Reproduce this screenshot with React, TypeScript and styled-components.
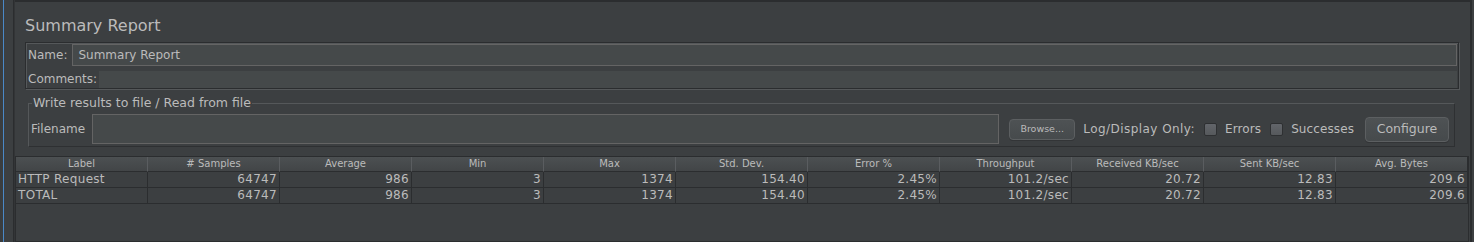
import React from "react";
import styled, { createGlobalStyle } from "styled-components";

interface ReportRow {
	label: string;
	samples: string;
	average: string;
	min: string;
	max: string;
	stdDev: string;
	errorPct: string;
	throughput: string;
	received: string;
	sent: string;
	avgBytes: string;
}

const COLUMNS = [
	"Label",
	"# Samples",
	"Average",
	"Min",
	"Max",
	"Std. Dev.",
	"Error %",
	"Throughput",
	"Received KB/sec",
	"Sent KB/sec",
	"Avg. Bytes",
];

const ROWS: Array<ReportRow> = [
	{
		label: "HTTP Request",
		samples: "64747",
		average: "986",
		min: "3",
		max: "1374",
		stdDev: "154.40",
		errorPct: "2.45%",
		throughput: "101.2/sec",
		received: "20.72",
		sent: "12.83",
		avgBytes: "209.6",
	},
	{
		label: "TOTAL",
		samples: "64747",
		average: "986",
		min: "3",
		max: "1374",
		stdDev: "154.40",
		errorPct: "2.45%",
		throughput: "101.2/sec",
		received: "20.72",
		sent: "12.83",
		avgBytes: "209.6",
	},
];

const GlobalStyle = createGlobalStyle`
	html, body {
		margin: 0;
		padding: 0;
		background: #3c3f41;
	}
	body {
		font-family: "DejaVu Sans", "Liberation Sans", sans-serif;
		color: #bbbbbb;
	}
	#root {
		height: 242px;
		overflow: hidden;
	}
`;

const Frame = styled.div`
	display: flex;
	width: 1474px;
	height: 242px;
	background: #3c3f41;
`;

const TreeEdge = styled.div`
	flex: 0 0 13px;
	background: linear-gradient(
		to right,
		#3a3d3f 0 3px,
		#4a88c7 3px 4px,
		#3c3f41 4px 100%
	);
`;

const SplitDivider = styled.div`
	flex: 0 0 2px;
	background: linear-gradient(to right, #2b2d2f 0 1px, #333537 1px 2px);
`;

const Panel = styled.div`
	flex: 1;
	display: flex;
	flex-direction: column;
	margin-right: 2px;
	border-top: 2px solid #2b2d2f;
	border-right: 2px solid #2b2d2f;
	min-width: 0;
`;

const Title = styled.div`
	margin: 14px 0 0 10px;
	font-size: 16px;
	line-height: 19px;
`;

const NameBox = styled.div`
	display: flex;
	flex-direction: column;
	gap: 5px;
	margin: 7px 11px 0 10px;
	padding: 1px 1px 0 2px;
	border: 1px solid #2b2d2f;
	box-shadow: inset 1px 1px 0 #55585a, 1px 1px 0 #55585a;
`;

const FieldRow = styled.div`
	display: flex;
	align-items: center;
`;

const Label = styled.span<{ $gap?: number; $spread?: number }>`
	font-size: 12px;
	line-height: 15px;
	white-space: nowrap;
	margin-right: ${(p) => p.$gap ?? 0}px;
	letter-spacing: ${(p) => p.$spread ?? 0}px;
`;

const TextInput = styled.input`
	flex: 1;
	height: 22px;
	box-sizing: border-box;
	margin: 0;
	padding: 0 5px;
	border: 1px solid #646464;
	background: #45494a;
	color: #bbbbbb;
	font-family: inherit;
	font-size: 12px;
	outline: none;
`;

const CommentsField = styled.div`
	flex: 1;
	height: 17px;
	background: #45494a;
`;

const GroupBox = styled.fieldset`
	margin: 6px 15px 0 13px;
	padding: 3px 5px 2px 2px;
	border: 1px solid #55585a;
	border-right-color: #2e3032;
	border-bottom-color: #2e3032;
	min-width: 0;
`;

const Legend = styled.legend`
	margin-left: 1px;
	padding: 0 1px;
	font-size: 12.5px;
	line-height: 16px;
`;

const FileRow = styled.div`
	display: flex;
	align-items: center;
	height: 30px;
`;

const FileField = styled.div`
	flex: 1;
	height: 30px;
	box-sizing: border-box;
	border: 1px solid #646464;
	background: #45494a;
`;

const Button = styled.button<{ $small?: boolean }>`
	box-sizing: border-box;
	height: ${(p) => (p.$small ? 21 : 25)}px;
	width: ${(p) => (p.$small ? 66 : 84)}px;
	margin: 0;
	padding: 0;
	border: 1px solid #5c5f61;
	border-radius: 4px;
	background: linear-gradient(#4e5254, #464a4c);
	box-shadow: 0 1px 0 #333537;
	color: #bbbbbb;
	font-family: inherit;
	font-size: ${(p) => (p.$small ? 9.5 : 12.5)}px;
	line-height: 1;
`;

const CheckItem = styled.label`
	display: flex;
	align-items: center;
	gap: 8px;
	font-size: 12px;
	line-height: 15px;
	white-space: nowrap;
	letter-spacing: 0.1px;
`;

const CheckBox = styled.span`
	display: inline-block;
	width: 13px;
	height: 13px;
	box-sizing: border-box;
	border: 1px solid #2e3032;
	border-radius: 2px;
	background: linear-gradient(#62656a, #56595c);
`;

const TableScroll = styled.div`
	flex: 1;
	margin: 9px 1px 0 0;
	border: 1px solid #2b2d2f;
	background: #3c3f41;
	overflow: hidden;
`;

const GridRow = styled.div`
	display: grid;
	grid-template-columns: repeat(11, 1fr);
`;

const HeadCell = styled.div`
	height: 15px;
	box-sizing: border-box;
	border-right: 1px solid #5a5d60;
	border-bottom: 1px solid #2b2d2f;
	background: linear-gradient(#4c5052, #424547);
	font-size: 10px;
	line-height: 14px;
	text-align: center;
	white-space: nowrap;
	overflow: hidden;

	&:last-child {
		border-right-color: #2b2d2f;
	}
`;

const Cell = styled.div<{ $left?: boolean }>`
	height: 16px;
	box-sizing: border-box;
	padding: 0 2px;
	border-right: 1px solid #2b2d2f;
	border-bottom: 1px solid #2b2d2f;
	font-size: 12px;
	line-height: 15px;
	letter-spacing: 0.3px;
	text-align: ${(p) => (p.$left ? "left" : "right")};
	white-space: nowrap;
	overflow: hidden;
`;

const App = (): JSX.Element => {
	return (
		<Frame>
			<GlobalStyle />
			<TreeEdge />
			<SplitDivider />
			<Panel>
				<Title>Summary Report</Title>
				<NameBox>
					<FieldRow>
						<Label $gap={5}>Name:</Label>
						<TextInput readOnly value="Summary Report" />
					</FieldRow>
					<FieldRow>
						<Label $gap={2}>Comments:</Label>
						<CommentsField />
					</FieldRow>
				</NameBox>
				<GroupBox>
					<Legend>Write results to file / Read from file</Legend>
					<FileRow>
						<Label $gap={7}>Filename</Label>
						<FileField />
						<Button $small style={{ marginLeft: 10 }}>
							Browse...
						</Button>
						<Label $spread={0.45} style={{ marginLeft: 8 }}>
							Log/Display Only:
						</Label>
						<CheckItem style={{ marginLeft: 9 }}>
							<CheckBox />
							Errors
						</CheckItem>
						<CheckItem style={{ marginLeft: 9 }}>
							<CheckBox />
							Successes
						</CheckItem>
						<Button style={{ marginLeft: 11 }}>Configure</Button>
					</FileRow>
				</GroupBox>
				<TableScroll>
					<GridRow>
						{COLUMNS.map((col) => (
							<HeadCell key={col}>{col}</HeadCell>
						))}
					</GridRow>
					{ROWS.map((row) => (
						<GridRow key={row.label}>
							<Cell $left>{row.label}</Cell>
							<Cell>{row.samples}</Cell>
							<Cell>{row.average}</Cell>
							<Cell>{row.min}</Cell>
							<Cell>{row.max}</Cell>
							<Cell>{row.stdDev}</Cell>
							<Cell>{row.errorPct}</Cell>
							<Cell>{row.throughput}</Cell>
							<Cell>{row.received}</Cell>
							<Cell>{row.sent}</Cell>
							<Cell>{row.avgBytes}</Cell>
						</GridRow>
					))}
				</TableScroll>
			</Panel>
		</Frame>
	);
};

export default App;
